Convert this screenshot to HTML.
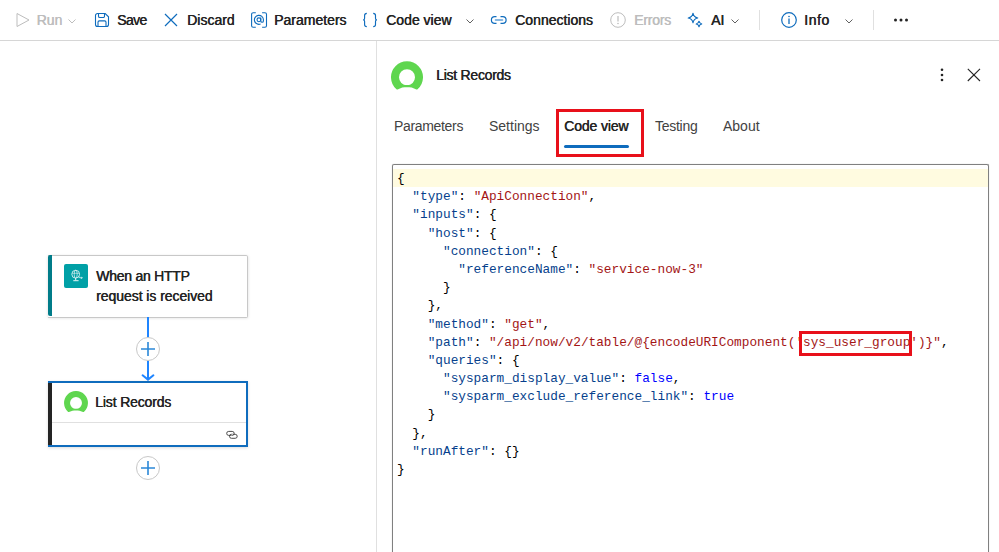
<!DOCTYPE html>
<html><head><meta charset="utf-8">
<style>
html,body{margin:0;padding:0;background:#fff;}
body{width:999px;height:552px;position:relative;overflow:hidden;font-family:"Liberation Sans",sans-serif;color:#242424;}
.abs{position:absolute;}
.tb{position:absolute;left:0;top:0;width:999px;height:40px;border-bottom:1px solid #d6d6d6;background:#fff;}
.tt{position:absolute;top:11px;font-size:14px;font-weight:normal;text-shadow:0.45px 0 0 currentColor;line-height:18px;white-space:nowrap;color:#242424;}
.dis{color:#bdbdbd;}
.ico{position:absolute;}
.sep{position:absolute;top:10px;width:1px;height:20px;background:#e0e0e0;}
.vline{position:absolute;left:376px;top:41px;width:1px;height:511px;background:#e0e0e0;}
.card{position:absolute;background:#fff;box-shadow:0 1px 3px rgba(0,0,0,0.14);}
.ctext{position:absolute;font-size:14px;font-weight:normal;text-shadow:0.45px 0 0 currentColor;line-height:20px;white-space:nowrap;color:#242424;}
.tab{position:absolute;top:117px;font-size:14px;line-height:18px;white-space:nowrap;color:#424242;}
.code{position:absolute;left:397px;top:170px;font-family:"Liberation Mono",monospace;font-size:12.78px;line-height:18.19px;white-space:pre;color:#000;}
.k{color:#063f8c}.s{color:#a31515}.b{color:#0000ff}
</style></head><body>
<div class="tb"></div>
<!-- toolbar -->
<svg class="ico" style="left:15px;top:12px" width="16" height="16" viewBox="0 0 16 16"><path d="M2 1.5 L14 8 L2 14.5 Z" fill="none" stroke="#bdbdbd" stroke-width="1" stroke-linejoin="round"/></svg>
<div class="tt dis" style="left:36.5px">Run</div>
<svg class="ico" style="left:67px;top:17px" width="10" height="8" viewBox="0 0 10 8"><path d="M1.5 2.5 L5 6 L8.5 2.5" fill="none" stroke="#bdbdbd" stroke-width="1"/></svg>

<svg class="ico" style="left:94px;top:12px" width="16" height="16" viewBox="0 0 16 16"><path d="M3.5 1.5 H11.2 L14.5 4.8 V12.5 A2 2 0 0 1 12.5 14.5 H3.5 A2 2 0 0 1 1.5 12.5 V3.5 A2 2 0 0 1 3.5 1.5 Z M4.5 1.5 V4.2 A1.3 1.3 0 0 0 5.8 5.5 H9.2 A1.3 1.3 0 0 0 10.5 4.2 V1.5 M4 14.5 V10.2 A1.3 1.3 0 0 1 5.3 8.9 H10.7 A1.3 1.3 0 0 1 12 10.2 V14.5" fill="none" stroke="#0f6cbd" stroke-width="1.1"/></svg>
<div class="tt" style="left:117px;letter-spacing:-0.6px">Save</div>

<svg class="ico" style="left:163px;top:12px" width="16" height="16" viewBox="0 0 16 16"><path d="M2 2 L14 14 M14 2 L2 14" fill="none" stroke="#0f6cbd" stroke-width="1.2"/></svg>
<div class="tt" style="left:187px">Discard</div>

<svg class="ico" style="left:250px;top:12px" width="18" height="16" viewBox="0 0 18 16"><path d="M5.8 0.7 H3.2 A1.6 1.6 0 0 0 1.6 2.3 V13.7 A1.6 1.6 0 0 0 3.2 15.3 H5.8 M12.1 0.7 H14.9 A1.6 1.6 0 0 1 16.5 2.3 V13.7 A1.6 1.6 0 0 1 14.9 15.3 H12.1" fill="none" stroke="#0f6cbd" stroke-width="1.1"/><circle cx="8.9" cy="7.8" r="1.9" fill="none" stroke="#0f6cbd" stroke-width="1.1"/><path d="M10.8 5.6 V9 A1.3 1.3 0 0 0 13.4 9 V7.8 A4.5 4.5 0 1 0 10.6 12" fill="none" stroke="#0f6cbd" stroke-width="1.1"/></svg>
<div class="tt" style="left:274px">Parameters</div>

<svg class="ico" style="left:362px;top:12px" width="16" height="16" viewBox="0 0 16 16"><path d="M4.8 1.4 C3.3 1.4 2.6 2 2.6 3.5 V6.2 C2.6 7.2 2 7.8 1.2 7.8 C2 7.8 2.6 8.4 2.6 9.4 V12.5 C2.6 14 3.3 14.6 4.8 14.6 M11.2 1.4 C12.7 1.4 13.5 2 13.5 3.5 V6.2 C13.5 7.2 14.1 7.8 14.9 7.8 C14.1 7.8 13.5 8.4 13.5 9.4 V12.5 C13.5 14 12.7 14.6 11.2 14.6" fill="none" stroke="#0f6cbd" stroke-width="1.15"/></svg>
<div class="tt" style="left:386px">Code view</div>
<svg class="ico" style="left:465px;top:17px" width="10" height="8" viewBox="0 0 10 8"><path d="M1.5 2.5 L5 6 L8.5 2.5" fill="none" stroke="#616161" stroke-width="1"/></svg>

<svg class="ico" style="left:490px;top:12px" width="18" height="16" viewBox="0 0 18 16"><path d="M6.5 4.6 H4.8 A3.4 3.4 0 0 0 4.8 11.4 H6.5 M10.5 4.6 H12.7 A3.4 3.4 0 0 1 12.7 11.4 H10.5" fill="none" stroke="#0f6cbd" stroke-width="1.2"/><path d="M5.5 8 H12.5" stroke="#5e9fd8" stroke-width="1.6" stroke-linecap="round"/></svg>
<div class="tt" style="left:515px">Connections</div>

<svg class="ico" style="left:610px;top:12px" width="16" height="16" viewBox="0 0 16 16"><circle cx="8" cy="8" r="7.3" fill="none" stroke="#bdbdbd" stroke-width="1"/><path d="M8 4 V9.5" stroke="#bdbdbd" stroke-width="1.2"/><circle cx="8" cy="11.5" r="0.8" fill="#bdbdbd"/></svg>
<div class="tt dis" style="left:634px;letter-spacing:-0.2px">Errors</div>

<svg class="ico" style="left:687px;top:12px" width="16" height="16" viewBox="0 0 16 16"><path d="M6 1.2000000000000002 Q6.67 5.33 10.8 6 Q6.67 6.67 6 10.8 Q5.33 6.67 1.2000000000000002 6 Q5.33 5.33 6 1.2000000000000002 Z M12 9.2 Q12.39 11.61 14.8 12 Q12.39 12.39 12 14.8 Q11.61 12.39 9.2 12 Q11.61 11.61 12 9.2 Z" fill="none" stroke="#0f6cbd" stroke-width="1.1" stroke-linejoin="round"/></svg>
<div class="tt" style="left:711px">AI</div>
<svg class="ico" style="left:730px;top:17px" width="10" height="8" viewBox="0 0 10 8"><path d="M1.5 2.5 L5 6 L8.5 2.5" fill="none" stroke="#616161" stroke-width="1"/></svg>
<div class="sep" style="left:759px"></div>

<svg class="ico" style="left:781px;top:12px" width="16" height="16" viewBox="0 0 16 16"><circle cx="8" cy="8" r="7.3" fill="none" stroke="#0f6cbd" stroke-width="1.2"/><path d="M8 6.5 V12" stroke="#0f6cbd" stroke-width="1.3"/><circle cx="8" cy="4.5" r="0.8" fill="#0f6cbd"/></svg>
<div class="tt" style="left:804px;letter-spacing:0.6px">Info</div>
<svg class="ico" style="left:844px;top:17px" width="10" height="8" viewBox="0 0 10 8"><path d="M1.5 2.5 L5 6 L8.5 2.5" fill="none" stroke="#616161" stroke-width="1"/></svg>
<div class="sep" style="left:873px"></div>
<svg class="ico" style="left:893px;top:14px" width="16" height="12" viewBox="0 0 16 12"><circle cx="2.5" cy="6" r="1.5" fill="#242424"/><circle cx="8" cy="6" r="1.5" fill="#242424"/><circle cx="13.5" cy="6" r="1.5" fill="#242424"/></svg>

<div class="vline"></div>

<!-- canvas -->
<div class="card" style="left:48px;top:255px;width:200px;height:62px;"><div class="abs" style="left:0;top:0;width:199px;height:61px;border:1px solid #c8c8c8;border-left:none;border-radius:0 2px 2px 0;box-sizing:content-box"></div>
  <div class="abs" style="left:0;top:0;width:4px;height:61px;background:#007c89;border-radius:2px 0 0 2px;"></div>
  <div class="abs" style="left:16px;top:9px;width:24px;height:24px;background:#00a0a6;border-radius:2px;"></div>
  <svg class="abs" style="left:16px;top:9px" width="24" height="24" viewBox="0 0 24 24"><circle cx="11.7" cy="10.2" r="3.9" fill="none" stroke="#fff" stroke-width="0.75"/><ellipse cx="11.7" cy="10.2" rx="1.5" ry="3.9" fill="none" stroke="#fff" stroke-width="0.6"/><path d="M8.2 9.3 H15.2" stroke="#fff" stroke-width="0.5"/><path d="M11.7 14.1 V16.2 M9.3 16.7 H14.6" stroke="#fff" stroke-width="0.9"/><path d="M14.8 12.5 L15.8 13.8 H18.2 M17.4 12.8 L18.2 13.8 L17.4 14.8" fill="none" stroke="#fff" stroke-width="0.75"/></svg>
  <div class="ctext" style="left:48px;top:11px"><span style="letter-spacing:-0.25px">When an HTTP</span><br><span style="letter-spacing:-0.06px">request is received</span></div>
</div>

<div class="abs" style="left:147px;top:317px;width:2px;height:62px;background:#1f85ff;"></div>
<svg class="ico" style="left:140px;top:370px" width="16" height="12" viewBox="0 0 16 12"><path d="M2.6 5.3 L8 9.6 L13.4 5.3" fill="none" stroke="#1f85ff" stroke-width="2" stroke-linecap="round"/></svg>
<div class="abs" style="left:136px;top:337px;width:22px;height:22px;border:1px solid #c8c8c8;border-radius:50%;background:#fff;"></div>
<svg class="ico" style="left:141px;top:342px" width="14" height="14" viewBox="0 0 14 14"><path d="M7 0 V14 M0 7 H14" stroke="#2b88d8" stroke-width="1.6"/></svg>

<div class="card" style="left:48px;top:381px;width:200px;height:66px;">
  <div class="abs" style="left:0;top:0;width:198px;height:62px;border:2px solid #0f6cbd;border-left:none;"></div>
  <div class="abs" style="left:0;top:2px;width:4px;height:62px;background:#242424;"></div>
  <div class="abs" style="left:4px;top:41px;width:194px;height:1px;background:#e0e0e0;"></div>
  <svg class="abs" style="left:16px;top:10.2px" width="24" height="22" viewBox="0 0 32 29.5"><path fill="#5fd64f" stroke="#5fd64f" stroke-width="2" stroke-linejoin="round" fill-rule="evenodd" d="M6.14 27.3 A15 15 0 1 1 25.86 27.3 Q16 22.3 6.14 27.3 Z M25 16 A9 9 0 1 0 7 16 A9 9 0 1 0 25 16 Z"/></svg>
  <div class="ctext" style="left:47px;top:11px;letter-spacing:-0.15px">List Records</div>
  <svg class="abs" style="left:177px;top:48px" width="14" height="12" viewBox="0 0 14 12"><rect x="1.7" y="2.4" width="7.5" height="4" rx="2" fill="none" stroke="#424242" stroke-width="0.95"/><rect x="4.5" y="5.3" width="7.7" height="4" rx="2" fill="none" stroke="#424242" stroke-width="0.95"/><path d="M6.2 6.6 L7.6 5.2" stroke="#fff" stroke-width="0.9"/></svg>
</div>

<div class="abs" style="left:136px;top:456px;width:22px;height:22px;border:1px solid #c8c8c8;border-radius:50%;background:#fff;"></div>
<svg class="ico" style="left:141px;top:461px" width="14" height="14" viewBox="0 0 14 14"><path d="M7 0 V14 M0 7 H14" stroke="#2b88d8" stroke-width="1.6"/></svg>

<!-- panel -->
<svg class="abs" style="left:391px;top:60.5px" width="32" height="30" viewBox="0 0 32 29.5"><path fill="#5fd64f" stroke="#5fd64f" stroke-width="2" stroke-linejoin="round" fill-rule="evenodd" d="M6.14 27.3 A15 15 0 1 1 25.86 27.3 Q16 22.3 6.14 27.3 Z M25 16 A9 9 0 1 0 7 16 A9 9 0 1 0 25 16 Z"/></svg>
<svg class="abs" style="left:936px;top:66px" width="12" height="18" viewBox="0 0 12 18"><circle cx="6" cy="3.8" r="1.3" fill="#242424"/><circle cx="6" cy="9" r="1.3" fill="#242424"/><circle cx="6" cy="14" r="1.3" fill="#242424"/></svg>
<svg class="abs" style="left:966px;top:67px" width="16" height="16" viewBox="0 0 16 16"><path d="M1.8 1.8 L14 14 M14 1.8 L1.8 14" stroke="#242424" stroke-width="1.1"/></svg>
<div class="ctext" style="left:436px;top:65px;letter-spacing:-0.27px">List Records</div>
<div class="tab" style="left:394px;letter-spacing:-0.33px">Parameters</div>
<div class="tab" style="left:489px">Settings</div>
<div class="tab" style="left:564px;text-shadow:0.45px 0 0 currentColor;color:#242424;letter-spacing:-0.12px">Code view</div>
<div class="tab" style="left:655px;letter-spacing:-0.28px">Testing</div>
<div class="tab" style="left:723px">About</div>
<div class="abs" style="left:564px;top:145px;width:65px;height:3px;border-radius:2px;background:#0f6cbd;"></div>
<div class="abs" style="left:556px;top:109px;width:82px;height:42px;border:3px solid #e8101a;"></div>

<div class="abs" style="left:392px;top:164px;width:595px;height:400px;border:1px solid #808080;border-radius:2px;border-bottom:none;box-shadow:0 0 1px rgba(0,0,0,0.3);"></div>
<div class="abs" style="left:393px;top:169px;width:595px;height:18px;background:#fffbe0;"></div>
<div class="code">{
  <span class="k">"type"</span>: <span class="s">"ApiConnection"</span>,
  <span class="k">"inputs"</span>: {
    <span class="k">"host"</span>: {
      <span class="k">"connection"</span>: {
        <span class="k">"referenceName"</span>: <span class="s">"service-now-3"</span>
      }
    },
    <span class="k">"method"</span>: <span class="s">"get"</span>,
    <span class="k">"path"</span>: <span class="s">"/api/now/v2/table/@{encodeURIComponent('sys_user_group')}"</span>,
    <span class="k">"queries"</span>: {
      <span class="k">"sysparm_display_value"</span>: <span class="b">false</span>,
      <span class="k">"sysparm_exclude_reference_link"</span>: <span class="b">true</span>
    }
  },
  <span class="k">"runAfter"</span>: {}
}</div>
<div class="abs" style="left:799px;top:331px;width:107px;height:19px;border:3px solid #e8101a;"></div>
</body></html>
